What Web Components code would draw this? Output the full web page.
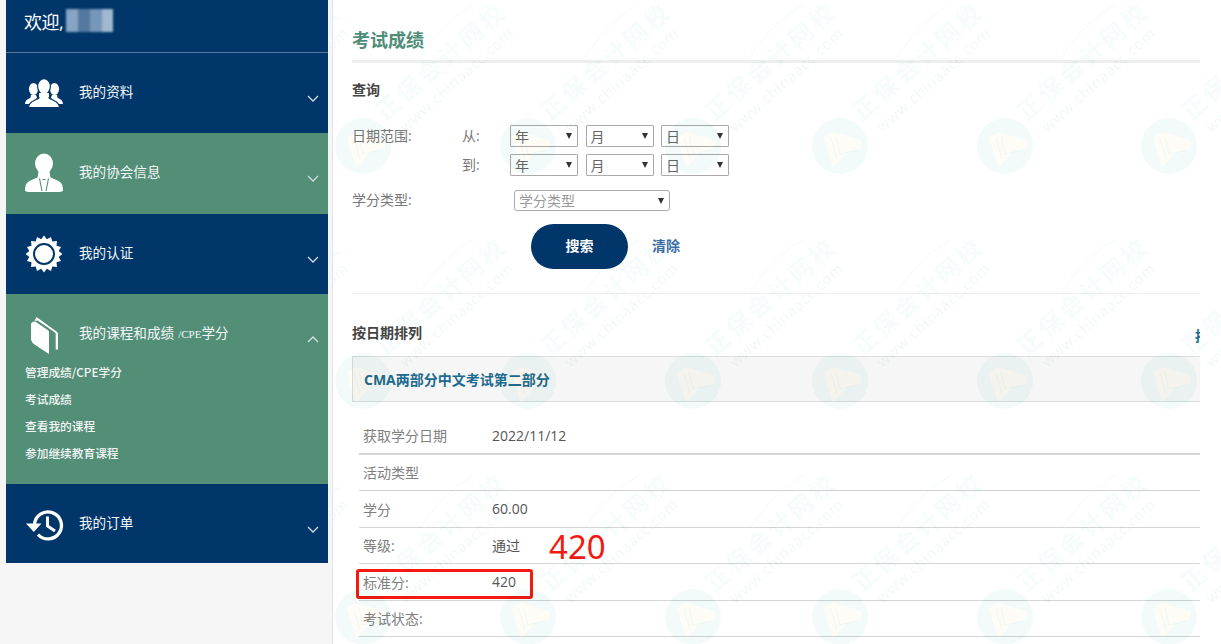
<!DOCTYPE html>
<html lang="zh">
<head>
<meta charset="utf-8">
<title>考试成绩</title>
<style>
  html, body { margin: 0; height: 100%; overflow: hidden; background: #f5f5f5; }
  body { font: 14px "Open Sans", "Noto Sans CJK SC", sans-serif; }
  .layout { display: flex; height: 644px; padding-left: 6px; box-sizing: border-box; }
</style>
</head>
<body>
<div class="layout">
  <side-bar>
    <nav-item label="我的资料" icon="people" tone="navy" h="80"></nav-item>
    <nav-item label="我的协会信息" icon="man" tone="green" h="81"></nav-item>
    <nav-item label="我的认证" icon="gear" tone="navy" h="80"></nav-item>
    <nav-item label="我的课程和成绩 <small>/CPE</small>学分" icon="book" tone="green" h="190" open>
      <a>管理成绩/CPE学分</a>
      <a>考试成绩</a>
      <a>查看我的课程</a>
      <a>参加继续教育课程</a>
    </nav-item>
    <nav-item label="我的订单" icon="history" tone="navy" h="79"></nav-item>
  </side-bar>
  <page-main>
    <search-form></search-form>
    <result-card title="CMA两部分中文考试第二部分">
      <score-row label="获取学分日期" value="2022/11/12" first></score-row>
      <score-row label="活动类型"></score-row>
      <score-row label="学分" value="60.00"></score-row>
      <score-row label="等级:" value="通过" note="420"></score-row>
      <score-row label="标准分:" value="420" mark></score-row>
      <score-row label="考试状态:"></score-row>
    </result-card>
  </page-main>
</div>

<script>
const CJK = '"Open Sans","Noto Sans CJK SC",sans-serif';

function gearPath() {
  let d = "";
  const n = 16;
  for (let i = 0; i < n * 2; i++) {
    const r = i % 2 ? 15 : 18.4;
    const a = (Math.PI * i) / n - Math.PI / 2;
    d += (i ? "L" : "M") + (19 + r * Math.cos(a)).toFixed(1) + " " + (20 + r * Math.sin(a)).toFixed(1);
  }
  return d + "Z";
}

const ICONS = {
  people: `
    <ellipse cx="8.500" cy="16" rx="4.600" ry="6" fill="#fff"/><path d="M0 31c.4-4 3-5 5.500-6.200l.5-3h5l1 3-5 6.200z" fill="#fff"/>
    <ellipse cx="29.500" cy="16" rx="4.600" ry="6" fill="#fff"/><path d="M38 31c-.4-4-3-5-5.500-6.200l-.5-3h-5l-1 3 5 6.200z" fill="#fff"/>
    <g stroke="#00366a" stroke-width="1.200">
      <ellipse cx="19" cy="13.500" rx="6.400" ry="7.800" fill="#fff"/>
      <path d="M3.500 34.500c.6-5 4-6.500 10-9l1.500-3.500h8l1.500 3.500c6 2.500 9.400 4 10 9z" fill="#fff"/>
    </g>
    <path d="M14 20h10v4h-10z" fill="#fff"/>`,
  man: `
    <ellipse cx="19" cy="10.500" rx="9" ry="10" fill="#fff"/>
    <path d="M13.500 18h11l1 7.500H12.500z" fill="#fff"/>
    <path d="M0 38c0-6 1.500-8.500 5.500-10.500l8-3.500h11l8 3.500c4 2 5.500 4.500 5.500 10.500l-3 1H3z" fill="#fff"/>
    <path d="M14.500 25.500 17 38M23.500 25.500 21 38M17.500 26.500h3" fill="none" stroke="#538f77" stroke-width="1.100"/>`,
  gear: `
    <path d="${gearPath()}" fill="#fff"/>
    <circle cx="19" cy="20" r="10" fill="#fff" stroke="#00366a" stroke-width="2"/>`,
  book: `
    <path d="M6 9.500c1-1.500 3.500-2.800 5-1.500l12 8.300c.8.600 1 1.200 1 2.500V40l-14.500-9.500C8 29.500 6 27 6 25z" fill="#fff"/>
    <path d="M11.500 3 31.500 17.500c1 .7 1.500 1.500 1.500 2.500v15.500h-2.300V20c0-.8-.3-1.300-1-1.800L12.500 6.500l-3 .5z" fill="#fff"/>`,
  history: `
    <path d="M9.500 20.500A13.500 13.500 0 1 1 13 30.500" fill="none" stroke="#fff" stroke-width="3.300"/>
    <path d="M1 19.500h15.500L8.800 28z" fill="#fff"/>
    <path d="M22.500 12.500v9.500l7.500 5" fill="none" stroke="#fff" stroke-width="3"/>`
};

class SideBar extends HTMLElement {
  constructor() {
    super();
    this.attachShadow({ mode: "open" }).innerHTML = `
      <style>
        :host { display: block; width: 322px; flex: none; align-self: flex-start; color: #fff; }
        .welcome {
          height: 53px; box-sizing: border-box; background: #00366a; border-bottom: 1px solid #55799e;
          display: flex; align-items: center; padding: 0 0 11px 18px;
          font: 18px ${CJK}; letter-spacing: -.5px;
        }
        .name {
          width: 47px; height: 23px; margin-left: 3px; filter: blur(.8px);
          background: linear-gradient(90deg, #88a4c4 0 12px, #54799f 12px 24px, #7696ba 24px 36px, #a2b8d0 36px 47px);
        }
      </style>
      <div class="welcome"><span>欢迎,</span><div class="name"></div></div>
      <slot></slot>`;
  }
}

class NavItem extends HTMLElement {
  constructor() {
    super();
    const open = this.hasAttribute("open");
    const bg = this.getAttribute("tone") === "green" ? "#538f77" : "#00366a";
    const chev = open ? "M1 6 6 1l5 5" : "M1 1l5 5 5-5";
    this.attachShadow({ mode: "open" }).innerHTML = `
      <style>
        :host { display: block; box-sizing: border-box; background: ${bg}; height: ${this.getAttribute("h")}px; overflow: hidden; }
        .head { display: flex; align-items: center; height: 80px; padding: 0 9px 0 19px; box-sizing: border-box; }
        svg.icon { width: 40px; height: 40px; flex: none; overflow: visible; }
        .label { flex: 1; margin: -4px 0 0 14px; font: 13.600px "Noto Sans CJK SC", sans-serif; color: #f4f7f8; white-space: nowrap; }
        small { font: 11px "Liberation Serif", serif; margin-left: 1px; }
        svg.chev { width: 12px; height: 7px; flex: none; margin-top: 10px; }
        .links { display: block; margin-top: -16.500px; padding-left: 19px; }
        ::slotted(a) { display: block; height: 27.300px; font: 500 11.700px/27.300px "Noto Sans CJK SC", sans-serif; color: #f2f5f4; }
      </style>
      <div class="head">
        <svg class="icon" viewBox="0 0 40 40">${ICONS[this.getAttribute("icon")]}</svg>
        <span class="label">${this.getAttribute("label")}</span>
        <svg class="chev" viewBox="0 0 12 7"><path d="${chev}" fill="none" stroke="#d3dde4" stroke-width="1.300"/></svg>
      </div>
      <div class="links"><slot></slot></div>`;
  }
}

class PageMain extends HTMLElement {
  constructor() {
    super();
    const cols = [198, 363, 528, 693, 840, 1005, 1169];
    const rows = [-89, 146, 381, 617];
    let marks = "";
    // watermark tiles, in page coordinates
    for (const cy of rows) for (const cx of cols) {
      marks += `<use href="#tile" x="${cx - 333}" y="${cy}"/>`;
    }
    const flag = "M-16-9-7-14 21-6c2 2 1 7-2 10L7 6-7 22c-2-8-7-22-9-31z";
    this.attachShadow({ mode: "open" }).innerHTML = `
      <style>
        :host {
          display: block; position: relative; flex: 1; min-width: 0; margin-left: 4px; height: 644px; box-sizing: border-box;
          padding: 28px 21px 0 19px; background: #fff; border-left: 1px solid #e6e6e6; overflow: hidden;
          font: 14px ${CJK}; color: #777;
        }
        h1 { margin: 0; font-size: 18px; line-height: 24px; font-weight: 700; color: #4f8d77; }
        hr { height: 3px; border: 0; margin: 8px 0 0; background: #eee; }
        svg.wm { position: absolute; left: 0; top: 0; width: 100%; height: 100%; pointer-events: none; mix-blend-mode: multiply; }
      </style>
      <h1>考试成绩</h1>
      <hr>
      <slot></slot>
      <svg class="wm" aria-hidden="true">
        <defs>
          <g id="tile">
            <path d="M-28 0a28 28 0 1 0 56 0a28 28 0 1 0-56 0z${flag}" fill-rule="evenodd" fill="rgb(64 190 180 / .065)"/>
            <path d="${flag}" fill="rgb(250 225 170 / .1)"/>
            <path d="M-9-8-3 13M-4-9 0 8 18 4" fill="none" stroke="rgb(64 190 180 / .07)" stroke-width="1"/>
            <text transform="translate(25 -39) rotate(-41)" x="-12" y="9" fill="rgb(64 190 180 / .05)"
              font-family="'Noto Sans CJK SC',sans-serif" font-weight="700" font-size="24" letter-spacing="3.400">正保会计网校</text>
            <text transform="translate(40 -16) rotate(-42)" y="4" fill="rgb(90 150 150 / .08)"
              font-family="'Open Sans',sans-serif" font-size="15" textLength="146">www.chinaacc.com</text>
            <path d="M57-89C72-112 90-130 110-141" fill="none" stroke="rgb(64 190 180 / .08)"/>
          </g>
        </defs>
        ${marks}
      </svg>`;
  }
}

class DateSelect extends HTMLElement {
  constructor() {
    super();
    const w = this.getAttribute("w") || 68;
    const h = this.getAttribute("h") || 22;
    const round = this.hasAttribute("round");
    this.attachShadow({ mode: "open" }).innerHTML = `
      <style>
        :host { display: inline-block; position: relative; width: ${w}px; height: ${h}px; }
        select {
          appearance: none; -webkit-appearance: none; width: 100%; height: 100%; box-sizing: border-box; margin: 0;
          border: 1px solid #aaa; border-radius: ${round ? 3 : 1}px; background: transparent;
          padding: 0 0 0 4px; font: 14px ${CJK}; color: ${round ? "#999" : "#666"};
        }
        i { position: absolute; right: 6px; top: 8px; border: 3.500px solid transparent; border-top: 6px solid #333; border-bottom: 0; }
      </style>
      <select><option>${this.getAttribute("text")}</option></select><i></i>`;
  }
}

class SearchForm extends HTMLElement {
  constructor() {
    super();
    const trio = `<date-select text="年"></date-select><date-select text="月"></date-select><date-select text="日"></date-select>`;
    this.attachShadow({ mode: "open" }).innerHTML = `
      <style>
        :host { display: block; height: 231px; box-sizing: border-box; padding-top: 17px; border-bottom: 1px solid #eee; }
        h2 { margin: 0 0 25px; font-size: 14px; line-height: 20px; font-weight: 700; color: #444; }
        .dates { display: grid; grid-template-columns: 110px 48px auto; row-gap: 7px; align-items: center; justify-content: start; }
        .dates > span, .type span { padding-bottom: 2px; }
        .trio { display: flex; gap: 7.500px; }
        .type { display: flex; align-items: center; margin-top: 13px; }
        .type span { width: 162px; }
        .acts { display: flex; align-items: center; margin: 13px 0 0 179px; gap: 24px; }
        button {
          width: 97px; height: 45px; border: 0; border-radius: 23px; background: #00366a; color: #fff;
          padding: 0 0 3px; font: 700 14px ${CJK};
        }
        a { font-weight: 700; color: #3a6ea5; padding-bottom: 3px; }
      </style>
      <h2>查询</h2>
      <div class="dates">
        <span>日期范围:</span><span>从:</span><div class="trio">${trio}</div>
        <span></span><span>到:</span><div class="trio">${trio}</div>
      </div>
      <div class="type"><span>学分类型:</span><date-select text="学分类型" w="156" h="21" round></date-select></div>
      <div class="acts"><button>搜索</button><a>清除</a></div>`;
  }
}

class ResultCard extends HTMLElement {
  constructor() {
    super();
    this.attachShadow({ mode: "open" }).innerHTML = `
      <style>
        :host { display: block; }
        .bar { display: flex; justify-content: space-between; padding-top: 29px; line-height: 20px; }
        h2 { margin: 0; font-size: 14px; font-weight: 700; color: #444; }
        .sort { width: 5px; overflow: hidden; margin-top: 3px; font-weight: 700; color: #1c6a8f; white-space: nowrap; }
        .box {
          height: 46px; box-sizing: border-box; margin-top: 10px; padding: 0 11px; display: flex; align-items: center;
          background: #f6f6f6; border: 1px solid #ddd; border-right: 0;
          font-weight: 700; color: #1c6a8f;
        }
        .rows { margin: 16px 0 0 7px; }
      </style>
      <div class="bar"><h2>按日期排列</h2><span class="sort">按课程排列</span></div>
      <div class="box">${this.getAttribute("title")}</div>
      <div class="rows"><slot></slot></div>`;
    this.removeAttribute("title");
  }
}

class ScoreRow extends HTMLElement {
  constructor() {
    super();
    const note = this.getAttribute("note");
    const val = this.getAttribute("value") || "";
    this.attachShadow({ mode: "open" }).innerHTML = `
      <style>
        :host {
          display: flex; align-items: center; position: relative; height: 36.500px; box-sizing: border-box;
          border-bottom: ${this.hasAttribute("first") ? 2 : 1}px solid #d4d4d4; padding-left: 4px;
        }
        .l { width: 129px; flex: none; color: #808080; }
        .v { color: #555; }
        .note { position: absolute; left: 190px; top: -3px; font: 33px/44px "Noto Sans", sans-serif; color: #f5190f; }
        .mark { position: absolute; left: -3px; top: 5px; width: 177px; height: 30px; box-sizing: border-box; border: 3px solid #f5190f; border-radius: 3px; }
      </style>
      <span class="l">${this.getAttribute("label")}</span><span class="v">${val}</span>
      ${note ? `<span class="note">${note}</span>` : ""}
      ${this.hasAttribute("mark") ? `<div class="mark"></div>` : ""}`;
  }
}

customElements.define("date-select", DateSelect);
customElements.define("search-form", SearchForm);
customElements.define("score-row", ScoreRow);
customElements.define("result-card", ResultCard);
customElements.define("nav-item", NavItem);
customElements.define("side-bar", SideBar);
customElements.define("page-main", PageMain);
</script>
</body>
</html>
